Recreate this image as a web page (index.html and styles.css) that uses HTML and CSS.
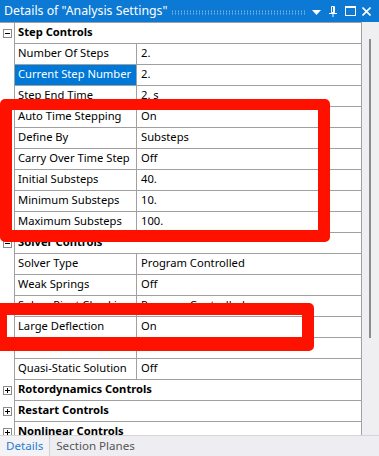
FILE: index.html
```html
<!DOCTYPE html>
<html>
<head>
<meta charset="utf-8">
<link rel="stylesheet" href="styles.css">
</head>
<body>
<div class="panel">
  <div class="titlebar">
    <span class="title">Details of "Analysis Settings"</span>
    <span class="grip"></span>
    <svg class="ico ico-drop" width="9" height="5" viewBox="0 0 9 5"><polygon points="0,0 9,0 4.5,5" fill="#fff"/></svg>
    <svg class="ico ico-pin" width="8" height="11" viewBox="0 0 8 11"><path d="M2.5 0.5h3v6h-3z M0 7.5h8 M4 7.5v3.5" stroke="#fff" fill="none" stroke-width="1"/><path d="M4.5 1v5.5" stroke="#fff" stroke-width="1"/></svg>
    <svg class="ico ico-max" width="11" height="10" viewBox="0 0 11 10"><rect x="0.5" y="1" width="10" height="8.5" fill="none" stroke="#fff" stroke-width="1"/><rect x="0" y="0" width="11" height="2" fill="#fff"/></svg>
    <svg class="ico ico-close" width="9" height="9" viewBox="0 0 9 9"><path d="M0.5 0.5L8.5 8.5M8.5 0.5L0.5 8.5" stroke="#fff" stroke-width="1.6"/></svg>
  </div>
  <div class="body">
    <div class="grid">
      <div class="row"><div class="indent"><span class="tog minus"></span></div><div class="head">Step Controls</div></div>
      <div class="row"><div class="indent"></div><div class="label">Number Of Steps</div><div class="value">2.</div></div>
      <div class="row"><div class="indent"></div><div class="label sel">Current Step Number</div><div class="value">2.</div></div>
      <div class="row"><div class="indent"></div><div class="label">Step End Time</div><div class="value">2. s</div></div>
      <div class="row"><div class="indent"></div><div class="label">Auto Time Stepping</div><div class="value">On</div></div>
      <div class="row"><div class="indent"></div><div class="label">Define By</div><div class="value">Substeps</div></div>
      <div class="row"><div class="indent"></div><div class="label">Carry Over Time Step</div><div class="value">Off</div></div>
      <div class="row"><div class="indent"></div><div class="label">Initial Substeps</div><div class="value">40.</div></div>
      <div class="row"><div class="indent"></div><div class="label">Minimum Substeps</div><div class="value">10.</div></div>
      <div class="row"><div class="indent"></div><div class="label">Maximum Substeps</div><div class="value">100.</div></div>
      <div class="row"><div class="indent"><span class="tog minus"></span></div><div class="head">Solver Controls</div></div>
      <div class="row"><div class="indent"></div><div class="label">Solver Type</div><div class="value">Program Controlled</div></div>
      <div class="row"><div class="indent"></div><div class="label">Weak Springs</div><div class="value">Off</div></div>
      <div class="row"><div class="indent"></div><div class="label">Solver Pivot Checking</div><div class="value">Program Controlled</div></div>
      <div class="row"><div class="indent"></div><div class="label">Large Deflection</div><div class="value">On</div></div>
      <div class="row"><div class="indent"></div><div class="label">Inertia Relief</div><div class="value">Off</div></div>
      <div class="row"><div class="indent"></div><div class="label">Quasi-Static Solution</div><div class="value">Off</div></div>
      <div class="row"><div class="indent"><span class="tog plus"></span></div><div class="head">Rotordynamics Controls</div></div>
      <div class="row"><div class="indent"><span class="tog plus"></span></div><div class="head">Restart Controls</div></div>
      <div class="row"><div class="indent"><span class="tog plus"></span></div><div class="head">Nonlinear Controls</div></div>
    </div>
    <div class="scrollbar"><div class="thumb"></div></div>
  </div>
  <div class="tabs">
    <span class="tab active">Details</span>
    <span class="tab">Section Planes</span>
  </div>
  <div class="mark mark1"></div>
  <div class="mark mark2"></div>
</div>
</body>
</html>
```
FILE: styles.css
```css
html, body {
  margin: 0;
  padding: 0;
  background: #fff;
}
.panel {
  position: relative;
  width: 379px;
  height: 456px;
  overflow: hidden;
  display: flex;
  flex-direction: column;
  font-family: "Noto Sans", "Open Sans", sans-serif;
  font-size: 11.2px;
  color: #000;
}
.titlebar {
  height: 22px;
  flex: none;
  background: #0c79d4;
  display: flex;
  align-items: center;
  padding-left: 4px;
  padding-right: 8px;
  box-sizing: border-box;
}
.title {
  color: #fff;
  font-size: 12.3px;
  white-space: nowrap;
  line-height: 22px;
}
.grip {
  flex: 1;
  height: 5px;
  margin: 2px 6px 0 4px;
  background-image: radial-gradient(circle, rgba(255,255,255,0.55) 0.7px, transparent 0.9px);
  background-size: 3px 2.5px;
}
.ico { flex: none; display: block; }
.ico-drop { margin-top: 2px; }
.ico-pin { margin-left: 8px; }
.ico-max { margin-left: 8px; }
.ico-close { margin-left: 6px; }
.body {
  flex: none;
  height: 413px;
  display: flex;
  overflow: hidden;
}
.grid {
  width: 362px;
  flex: none;
  border-top: 1px solid #a0a0a0;
  border-right: 1px solid #a0a0a0;
  box-sizing: border-box;
  overflow: hidden;
}
.row {
  display: flex;
  height: 21px;
}
.indent {
  width: 15px;
  flex: none;
  border-right: 1px solid #a0a0a0;
  box-sizing: border-box;
  display: flex;
  align-items: center;
  padding-left: 3px;
}
.label, .value, .head {
  border-bottom: 1px solid #a0a0a0;
  box-sizing: border-box;
  height: 21px;
  line-height: 18px;
  white-space: nowrap;
  overflow: hidden;
}
.label {
  width: 122px;
  flex: none;
  border-right: 1px solid #a0a0a0;
  padding-left: 3px;
}
.label.sel {
  background: #0078d7;
  color: #fff;
}
.value {
  flex: 1;
  padding-left: 4px;
}
.head {
  flex: 1;
  font-weight: bold;
  padding-left: 3px;
}
.tog {
  position: relative;
  width: 9px;
  height: 9px;
  border: 1px solid #8a8a8a;
  box-sizing: border-box;
  background: #fff;
  display: block;
}
.tog::before {
  content: "";
  position: absolute;
  left: 1px;
  top: 3px;
  width: 5px;
  height: 1px;
  background: #000;
}
.tog.plus::after {
  content: "";
  position: absolute;
  left: 3px;
  top: 1px;
  width: 1px;
  height: 5px;
  background: #000;
}
.scrollbar {
  flex: 1;
  background: #efeff1;
}
.thumb {
  width: 2px;
  height: 299px;
  margin-top: 17px;
  margin-left: 7px;
  background: #8c8c8c;
}
.tabs {
  flex: 1;
  background: #eeeef2;
  border-top: 1px solid #d4d4da;
  display: flex;
  align-items: stretch;
}
.tab {
  font-size: 11.6px;
  color: #555;
  padding: 0 6px;
  line-height: 20px;
}
.tab.active {
  color: #2a7bd0;
  border-right: 1px solid #cfcfd6;
  background: #f3f3f6;
}
.mark {
  position: absolute;
  border: 12px solid #ff1100;
  border-radius: 5px;
  box-sizing: border-box;
}
.mark1 {
  left: 0;
  top: 99px;
  width: 330px;
  height: 143px;
  border-top-width: 11px;
}
.mark2 {
  left: -5px;
  top: 303px;
  width: 319px;
  height: 48px;
  border-bottom-width: 14px;
}
```
